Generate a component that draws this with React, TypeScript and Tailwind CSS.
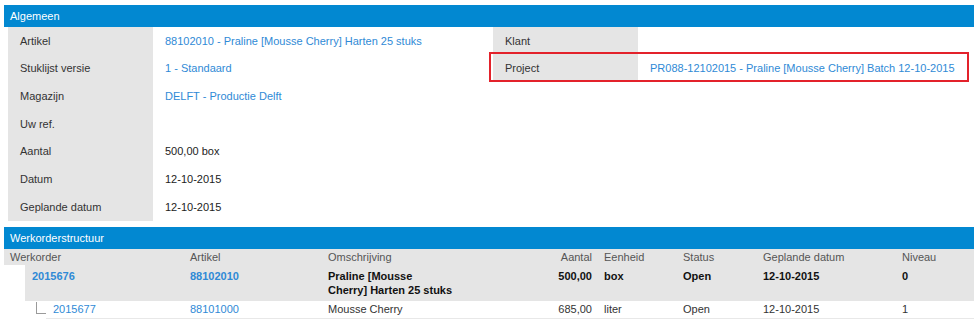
const link = "text-[#2f8ad6]";

const leftRows: { label: string; value: string; isLink?: boolean }[] = [
  { label: "Artikel", value: "88102010 - Praline [Mousse Cherry] Harten 25 stuks", isLink: true },
  { label: "Stuklijst versie", value: "1 - Standaard", isLink: true },
  { label: "Magazijn", value: "DELFT - Productie Delft", isLink: true },
  { label: "Uw ref.", value: "" },
  { label: "Aantal", value: "500,00 box" },
  { label: "Datum", value: "12-10-2015" },
  { label: "Geplande datum", value: "12-10-2015" },
];

const SectionHeader = ({ title }: { title: string }) => (
  <div className="h-[22px] bg-[#0288d1] text-white pl-[6px] leading-[22px]">{title}</div>
);

const InfoRow = ({
  label,
  value,
  isLink,
  highlight,
}: {
  label: string;
  value: string;
  isLink?: boolean;
  highlight?: boolean;
}) => (
  <div className="relative flex h-[27.7px] items-center">
    <div className="w-[145px] h-full bg-[#e5e5e5] pl-3 flex items-center text-[#333]">{label}</div>
    <div className={`pl-3 ${isLink ? link : "text-[#222]"}`}>{value}</div>
    {highlight && (
      <span className="absolute -top-[3px] bottom-0 -left-[4px] right-[5px] border-2 border-[#e3222b]" />
    )}
  </div>
);

// column widths, measured from the left edge of each column
const cols = {
  artikel: "w-[138px]",
  omschr: "w-[134px] whitespace-nowrap",
  aantal: "w-[130px] text-right",
  eenheid: "w-[91px] pl-[12px]",
  status: "w-[80px]",
  datum: "w-[139px]",
  niveau: "flex-1",
};

export default function App() {
  return (
    <div className="w-[980px] h-[324px] bg-white overflow-hidden text-[11px] font-['Liberation_Sans',Arial,sans-serif]">
      <div className="ml-[4px] mt-[5px] w-[970px]">
        <SectionHeader title="Algemeen" />
        <div className="grid grid-cols-2">
          <div className="pl-[4px]">
            {leftRows.map((r) => (
              <InfoRow key={r.label} {...r} />
            ))}
          </div>
          <div className="pl-[4px]">
            <InfoRow label="Klant" value="" />
            <InfoRow
              label="Project"
              value="PR088-12102015 - Praline [Mousse Cherry] Batch 12-10-2015"
              isLink
              highlight
            />
          </div>
        </div>

        <div className="mt-[6px]">
          <SectionHeader title="Werkorderstructuur" />
          <div className="flex h-[16px] leading-[16px] bg-[#e5e5e5] text-[#555]">
            <div className="w-[186px] pl-[6px]">Werkorder</div>
            <div className={cols.artikel}>Artikel</div>
            <div className={cols.omschr}>Omschrijving</div>
            <div className={cols.aantal}>Aantal</div>
            <div className={cols.eenheid}>Eenheid</div>
            <div className={cols.status}>Status</div>
            <div className={cols.datum}>Geplande datum</div>
            <div className={cols.niveau}>Niveau</div>
          </div>

          <div className="ml-[21px] flex bg-[#e5e5e5] pt-[4px] pb-[4px] leading-[14px] font-bold text-[#111]">
            <div className={`w-[165px] pl-[7px] ${link}`}>2015676</div>
            <div className={`${cols.artikel} ${link}`}>88102010</div>
            <div className={cols.omschr}>
              Praline [Mousse
              <br />
              Cherry] Harten 25 stuks
            </div>
            <div className={cols.aantal}>500,00</div>
            <div className={cols.eenheid}>box</div>
            <div className={cols.status}>Open</div>
            <div className={cols.datum}>12-10-2015</div>
            <div className={cols.niveau}>0</div>
          </div>

          <div className="ml-[21px] flex">
            <div className="w-[21px] shrink-0">
              <span className="block ml-[11px] mt-[1px] w-[10px] h-[12px] border-l border-b border-[#9a9a9a]" />
            </div>
            <div className="flex-1 flex h-[18px] leading-[17px] border-b border-[#e8e8e8] text-[#333]">
              <div className={`w-[144px] pl-[7px] ${link}`}>2015677</div>
              <div className={`${cols.artikel} ${link}`}>88101000</div>
              <div className={cols.omschr}>Mousse Cherry</div>
              <div className={cols.aantal}>685,00</div>
              <div className={cols.eenheid}>liter</div>
              <div className={cols.status}>Open</div>
              <div className={cols.datum}>12-10-2015</div>
              <div className={cols.niveau}>1</div>
            </div>
          </div>
        </div>
      </div>
    </div>
  );
}
